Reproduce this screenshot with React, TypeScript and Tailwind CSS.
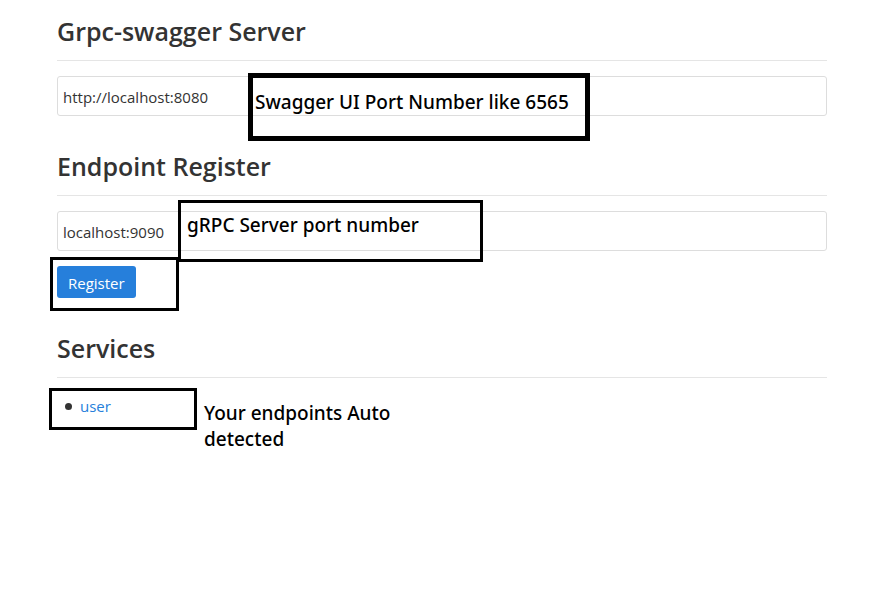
import { useState } from "react";
import type { ReactNode } from "react";

function Section({ title, children }: { title: string; children: ReactNode }) {
  return (
    <section>
      <h2 className="mb-[15px] border-b border-[#e5e5e5] pb-[11px] text-[25px] leading-9 font-semibold text-[#333]">
        {title}
      </h2>
      {children}
    </section>
  );
}

function Field({ label, initial, children }: { label: string; initial: string; children: ReactNode }) {
  const [value, setValue] = useState(initial);
  return (
    <div className="relative">
      <input
        type="text"
        aria-label={label}
        value={value}
        onChange={(e) => setValue(e.target.value)}
        className="block h-10 w-full rounded-[3px] border border-[#ddd] bg-white px-[5px] pt-0.5 text-[15px] text-[#333] outline-none"
      />
      {children}
    </div>
  );
}

const note = "pointer-events-none absolute font-['Noto_Sans','Open_Sans',sans-serif] text-[19px] leading-[26px] font-medium whitespace-nowrap text-black";

export default function App() {
  return (
    <main className="flex min-h-screen flex-col gap-8 bg-white pt-[13px] pr-[51px] pb-8 pl-[57px] font-['Open_Sans','Noto_Sans',sans-serif]">
      <Section title="Grpc-swagger Server">
        <Field label="Grpc-swagger Server" initial="http://localhost:8080">
          <div className={`${note} -top-[3px] left-[191px] h-[68px] w-[342px] border-[5px] border-black px-0.5 pt-[11px]`}>
            Swagger UI Port Number like 6565
          </div>
        </Field>
      </Section>

      <Section title="Endpoint Register">
        <Field label="Endpoint Register" initial="localhost:9090">
          <div className={`${note} -top-[11px] left-[121px] h-[62px] w-[305px] border-[3px] border-black px-1.5 pt-[9px]`}>
            gRPC Server port number
          </div>
        </Field>
        <div className="relative mt-[15px] flex">
          <button type="button" className="h-8 rounded-[3px] bg-[#267fdb] px-[11px] pt-0.5 text-[15px] text-white">
            Register
          </button>
          <div className="pointer-events-none absolute -top-[9px] -left-[7px] h-[54px] w-[129px] border-[3px] border-black" />
        </div>
      </Section>

      <Section title="Services">
        <div className="relative">
          <ul className="flex flex-col pl-2 text-[15px] leading-[26px]">
            <li className="flex items-center gap-2">
              <span className="size-[7px] rounded-full bg-[#333]" />
              <a href="#user" className="text-[#267fdb]">user</a>
            </li>
          </ul>
          <div className="pointer-events-none absolute -top-[5px] -left-[8px] h-[42px] w-[148px] border-[3px] border-black" />
          <p className={`${note} top-[7px] left-[147px]`}>
            Your endpoints Auto
            <br />
            detected
          </p>
        </div>
      </Section>
    </main>
  );
}
